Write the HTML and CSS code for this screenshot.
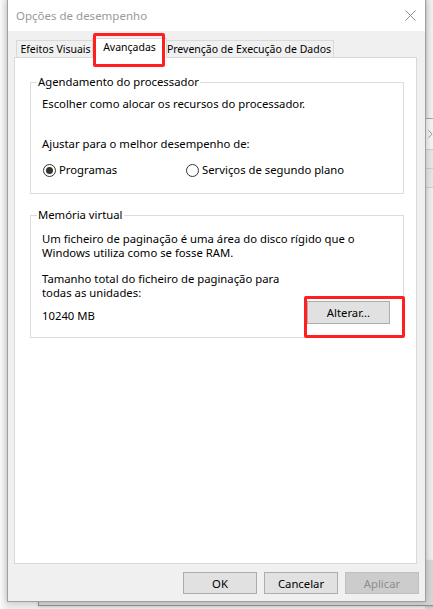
FILE: index.html
```html
<!DOCTYPE html>
<html lang="pt">
<head>
<meta charset="utf-8">
<title>Opções de desempenho</title>
<link rel="stylesheet" href="styles.css">
</head>
<body>
<div class="desktop">
  <div class="bg-right">
    <div class="bgr-top"></div>
    <div class="bgr-chev">
      <svg width="6" height="10" viewBox="0 0 6 10"><path d="M0.5 0.5 L5 5 L0.5 9.5" fill="none" stroke="#8a8a8a" stroke-width="1"/></svg>
    </div>
    <div class="bgr-row"></div>
    <div class="bgr-row"></div>
    <div class="bgr-fill"></div>
    <div class="bgr-foot"></div>
  </div>
  <div class="bg-bottom"></div>

  <div class="dialog">
    <div class="titlebar">
      <span class="title">Opções de desempenho</span>
      <svg class="close" width="11" height="11" viewBox="0 0 11 11"><path d="M0.5 0.5 L10.5 10.5 M10.5 0.5 L0.5 10.5" stroke="#8d8d8d" stroke-width="1" fill="none"/></svg>
    </div>
    <div class="body">
      <div class="tabs">
        <div class="tab t1">Efeitos Visuais</div>
        <div class="tab t2 sel">Avançadas</div>
        <div class="tab t3">Prevenção de Execução de Dados</div>
      </div>
      <div class="panel">
        <fieldset class="group g1">
          <legend>Agendamento do processador</legend>
          <div class="gbody">
            <p class="line">Escolher como alocar os recursos do processador.</p>
            <p class="line adjust">Ajustar para o melhor desempenho de:</p>
            <div class="radios">
              <label class="radio"><span class="circle on"></span><span>Programas</span></label>
              <label class="radio"><span class="circle"></span><span>Serviços de segundo plano</span></label>
            </div>
          </div>
        </fieldset>
        <fieldset class="group g2">
          <legend>Memória virtual</legend>
          <div class="gbody">
            <p class="line">Um ficheiro de paginação é uma área do disco rígido que o<br>Windows utiliza como se fosse RAM.</p>
            <p class="line total">Tamanho total do ficheiro de paginação para<br>todas as unidades:</p>
            <div class="sizerow">
              <span class="size">10240 MB</span>
              <span class="btn alter">Alterar...</span>
            </div>
          </div>
        </fieldset>
      </div>
      <div class="buttons">
        <span class="btn dlg">OK</span>
        <span class="btn dlg">Cancelar</span>
        <span class="btn dlg disabled">Aplicar</span>
      </div>
    </div>
  </div>

  <div class="mark mark-tab"></div>
  <div class="mark mark-btn"></div>
</div>
</body>
</html>
```

FILE: styles.css
```css
* { box-sizing: border-box; }
html, body { margin: 0; padding: 0; }
body {
  font-family: "Noto Sans", "Open Sans", sans-serif;
  font-size: 11.3px;
  color: #000;
  background: #f6f6f6;
}
.desktop {
  position: relative;
  width: 433px;
  height: 609px;
  overflow: hidden;
  background: linear-gradient(to right, #fafafa 0px, #ececec 7px);
}

/* background windows */
.bg-right {
  position: absolute;
  left: 425px;
  top: 0;
  width: 8px;
  height: 609px;
  display: flex;
  flex-direction: column;
  background: #f0f0f0;
}
.bgr-top {
  height: 119px;
  background: linear-gradient(to right, #d4d4d4, #ececec 3px, #f2f2f2);
  border-bottom: 1px solid #a8a8a8;
}
.bgr-chev {
  height: 30px;
  display: flex;
  align-items: center;
  padding-left: 3px;
  background: #f4f4f4;
}
.bgr-row {
  height: 19px;
  border-top: 1px solid #cfcfcf;
  background: #e6e6e6;
}
.bgr-fill {
  flex: 1;
  border-top: 1px solid #cfcfcf;
  background: linear-gradient(to right, #dcdcdc, #eeeeee 3px);
}
.bgr-foot {
  height: 40px;
  border-top: 1px solid #c8c8c8;
  background: #d4d4d4;
}
.bg-bottom {
  position: absolute;
  left: 38px;
  top: 560px;
  width: 400px;
  height: 46px;
  background: #d6d6d6;
  border-left: 1px solid #8f8f8f;
  border-bottom: 1px solid #8f8f8f;
  box-shadow: 0 1px 3px rgba(0,0,0,0.15);
}

/* dialog */
.dialog {
  position: relative;
  margin-left: 7px;
  width: 419px;
  height: 602px;
  border: 1px solid #a0a0a0;
  border-top: none;
  background: #f0f0f0;
  box-shadow: 0 0 7px rgba(0,0,0,0.22);
  display: flex;
  flex-direction: column;
}
.titlebar {
  height: 31px;
  background: #fff;
  display: flex;
  align-items: center;
  justify-content: space-between;
  padding: 0 9px 0 8px;
}
.title {
  color: #999;
  font-size: 11.5px;
}
.close { display: block; margin-top: -1px; }

.body {
  flex: 1;
  display: flex;
  flex-direction: column;
  padding: 7px 6px 7px 6px;
}

/* tabs */
.tabs {
  height: 19px;
  display: flex;
  align-items: flex-end;
  padding-left: 2px;
  position: relative;
  z-index: 1;
}
.tab {
  height: 17px;
  border: 1px solid #d9d9d9;
  border-bottom: none;
  background: #f0f0f0;
  display: flex;
  align-items: center;
  justify-content: center;
  white-space: nowrap;
  line-height: 14px;
  font-size: 10.5px;
}
.t1 { width: 78px; border-right: none; }
.t2 { width: 71px; }
.t3 { width: 169px; border-left: none; }
.tab.sel {
  width: 75px;
  height: 20px;
  margin: 0 -2px -1px -2px;
  background: #fff;
  border-left: 1px solid #d9d9d9;
  border-right: 1px solid #d9d9d9;
  padding-bottom: 3px;
  position: relative;
  z-index: 2;
}

.panel {
  height: 507px;
  margin-right: 2px;
  background: #fff;
  border: 1px solid #d9d9d9;
  padding: 16px 12px 0 15px;
}

/* group boxes */
.group {
  margin: 0;
  padding: 0;
  border: 1px solid #dcdcdc;
  min-width: 0;
}
.group legend {
  margin-left: 6px;
  padding: 0 1px;
  line-height: 16px;
  height: 16px;
}
.gbody {
  padding-left: 11px;
  padding-right: 13px;
}
.line {
  margin: 0;
  line-height: 14px;
  white-space: nowrap;
}
.g1 .gbody { padding-top: 7px; padding-bottom: 16px; }
.adjust { margin-top: 26px; }
.radios {
  margin-top: 12px;
  height: 14px;
  display: grid;
  grid-template-columns: 143px auto;
  margin-left: 1px;
}
.radio {
  display: flex;
  align-items: center;
  gap: 3px;
  line-height: 14px;
  white-space: nowrap;
}
.circle {
  width: 13px;
  height: 13px;
  border: 1px solid #333;
  border-radius: 50%;
  background: #fff;
  display: flex;
  align-items: center;
  justify-content: center;
  flex: none;
}
.circle.on::after {
  content: "";
  width: 7px;
  height: 7px;
  border-radius: 50%;
  background: #333;
}

.g2 { margin-top: 13px; }
.g2 .gbody { padding-top: 9px; padding-bottom: 13px; }
.total { margin-top: 12px; }
.sizerow {
  margin-top: 1px;
  display: flex;
  align-items: flex-end;
  justify-content: space-between;
}
.size {
  line-height: 14px;
  margin-bottom: 1px;
}

/* buttons */
.btn {
  display: flex;
  align-items: center;
  justify-content: center;
  background: #e1e1e1;
  border: 1px solid #adadad;
  white-space: nowrap;
}
.alter {
  width: 83px;
  height: 23px;
  padding-bottom: 1px;
}
.buttons {
  margin-top: 8px;
  display: flex;
  justify-content: flex-end;
  gap: 7px;
}
.dlg {
  width: 74px;
  height: 22px;
}
.dlg.disabled {
  background: #cccccc;
  border-color: #bfbfbf;
  color: #8c8c8c;
}

/* red annotation boxes */
.mark {
  position: absolute;
  border: 3px solid #ff1f1f;
  border-radius: 2px;
  z-index: 5;
}
.mark-tab { left: 93px; top: 33px; width: 72px; height: 34px; }
.mark-btn { left: 304px; top: 296px; width: 101px; height: 42px; }
```
